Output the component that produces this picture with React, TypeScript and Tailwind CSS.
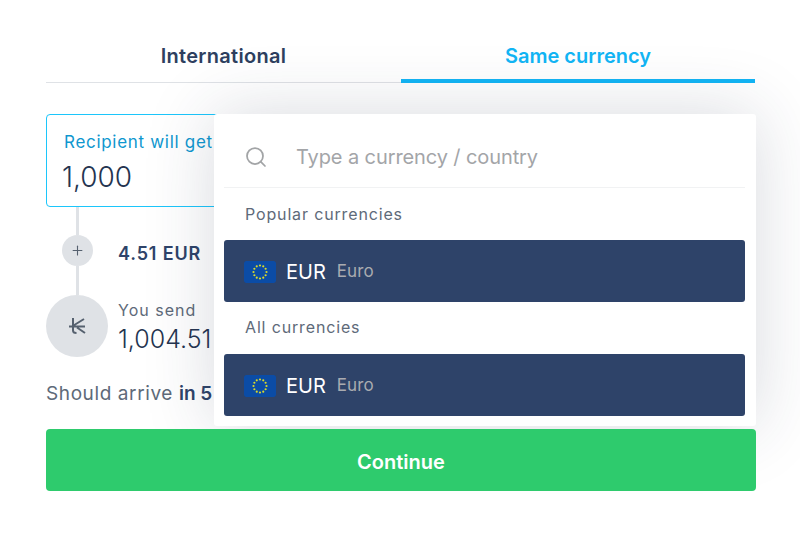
import { Plus, Search } from "lucide-react";

function EuFlag() {
  const stars = Array.from({ length: 12 }, (_, i) => {
    const a = (i * Math.PI) / 6;
    return { x: 16 + 6.5 * Math.sin(a), y: 11 - 6.5 * Math.cos(a) };
  });
  return (
    <svg width="32" height="22" viewBox="0 0 32 22" className="flex-none rounded-[2px]">
      <rect width="32" height="22" rx="2" fill="#0b4ca6" />
      {stars.map((s, i) => (
        <circle key={i} cx={s.x} cy={s.y} r="1.1" fill="#d9d92a" />
      ))}
    </svg>
  );
}

function CurrencyRow() {
  return (
    <div className="flex h-[62px] items-center rounded-[3px] bg-[#2e4369] pt-[2px] pl-5">
      <EuFlag />
      <span className="ml-[10px] text-[20px] text-white">EUR</span>
      <span className="ml-[11px] text-[17px] tracking-[0.1px] text-[#a9abb0]">Euro</span>
    </div>
  );
}

function CurrencyDropdown() {
  return (
    <div className="absolute top-[114px] left-[214px] z-10 h-[312px] w-[542px] rounded-[3px] bg-white pr-[11px] pl-[10px] shadow-[0_0_70px_rgba(40,50,80,0.18)]">
      <div className="flex h-[74px] items-center border-b border-[#f1f2f3] pt-[12px] pl-5">
        <Search size={24} strokeWidth={1.75} className="text-[#a2a4a6]" />
        <span className="ml-[28px] text-[20px] tracking-[-0.1px] text-[#a3a5a8]">Type a currency / country</span>
      </div>
      <p className="mt-[16px] mb-[15px] pl-[21px] text-[16px] leading-[21px] tracking-[0.85px] text-[#5e6a79]">
        Popular currencies
      </p>
      <CurrencyRow />
      <p className="mt-[15px] mb-[16px] pl-[21px] text-[16px] leading-[21px] tracking-[0.85px] text-[#5e6a79]">
        All currencies
      </p>
      <CurrencyRow />
    </div>
  );
}

export default function App() {
  return (
    <div className="relative h-[544px] w-[800px] overflow-hidden bg-white px-[46px] font-['Inter',sans-serif] text-[#2e4369]">
      <div className="flex h-[83px] items-end border-b border-[#dfe2e6]">
        <div className="flex h-[83px] w-[355px] flex-none items-center justify-center pt-[30px] text-[20px] font-semibold tracking-[0.3px] text-[#2e3f5f]">
          International
        </div>
        <div className="-mb-px flex h-[84px] w-[354px] flex-none items-center justify-center border-b-4 border-[#12b5f5] pt-[34px] text-[20px] font-semibold text-[#12b5f5]">
          Same currency
        </div>
      </div>

      <div className="mt-[31px] h-[93px] rounded-[4px] border border-[#1cc6fb] pt-[15px] pl-[17px]">
        <p className="text-[17px] leading-[24px] tracking-[0.7px] text-[#0f97cf]">Recipient will get</p>
        <p className="-ml-[2px] pt-[4px] text-[28px] leading-[38px] font-light text-[#243450]">1,000</p>
      </div>

      <div className="flex">
        <div className="flex w-[62px] flex-none flex-col items-center">
          <div className="h-[28px] w-[3px] bg-[#dfe2e6]" />
          <div className="flex h-[31px] w-[31px] items-center justify-center rounded-full bg-[#dfe2e6]">
            <Plus size={15} strokeWidth={1.75} className="text-[#56616f]" />
          </div>
          <div className="h-[29px] w-[3px] bg-[#dfe2e6]" />
          <div className="flex h-[62px] w-[62px] items-center justify-center rounded-full bg-[#dfe2e6]">
            <svg width="20" height="20" viewBox="0 0 20 20" fill="none" stroke="#56616f" strokeWidth="2">
              <path d="M6 2V14.5Q6 17 9.5 17M2 10.5H18M17 3L6.5 9.5M10 11.5L18 17" />
            </svg>
          </div>
        </div>
        <div className="ml-[10px]">
          <p className="mt-[35px] text-[18px] leading-[24px] font-semibold tracking-[0.85px] text-[#2e4369]">4.51 EUR</p>
          <p className="mt-[32px] text-[16px] leading-[24px] tracking-[1px] text-[#5e6a79]">You send</p>
          <p className="text-[25px] leading-[34px] font-light text-[#243450]">1,004.51</p>
        </div>
      </div>

      <p className="mt-[23px] text-[19px] leading-[28px] tracking-[0.6px] text-[#5e6a79]">
        Should arrive <span className="font-semibold tracking-normal text-[#2e4369]">in 5</span>
      </p>

      <button className="relative z-20 mt-[21px] flex h-[62px] w-[710px] items-center justify-center rounded-[4px] bg-[#2ecb6d] pt-[3px] text-[20px] font-semibold text-white">
        Continue
      </button>

      <CurrencyDropdown />
    </div>
  );
}
